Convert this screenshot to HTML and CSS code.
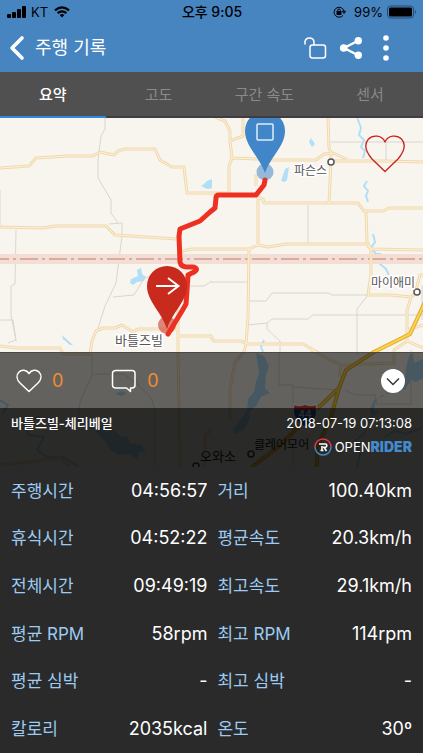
FILE: index.html
```html
<!DOCTYPE html>
<html lang="ko">
<head>
<meta charset="utf-8">
<meta name="viewport" content="width=device-width, initial-scale=1">
<title>주행 기록</title>
<link rel="stylesheet" href="styles.css">
</head>
<body>
<header class="header">
  <div class="status">
    <div class="status-side">
      <svg width="20" height="12" viewBox="0 0 20 12" aria-hidden="true"><rect x="0" y="8" width="4" height="4" rx="1"/><rect x="5" y="6" width="4" height="6" rx="1"/><rect x="10" y="3" width="4" height="9" rx="1"/><rect x="15" y="0" width="4" height="12" rx="1"/></svg>
      <span class="carrier">KT</span>
      <svg class="wifi" width="16" height="12" viewBox="0 0 16 12" fill="none" stroke="#000" stroke-width="2.2" aria-hidden="true"><path d="M1 4.4Q8-1.8 15 4.4M3.6 7.2Q8 3.4 12.4 7.2"/><path d="M5.6 9L8 11.6 10.4 9Q8 7.2 5.6 9z" fill="#000" stroke="none"/></svg>
    </div>
    <span class="clock">오후 9:05</span>
    <div class="status-side status-right">
      <svg class="rotation" width="13" height="12" viewBox="0 0 13 12" fill="none" stroke="#000" aria-hidden="true"><path d="M10 9.4A5 5 0 1 1 11 5.2M9.4 5.2h3.2L11 7.6z"/><rect x="4" y="5.5" width="4" height="3" fill="#000"/><path d="M4.6 5.5V4.4a1.4 1.4 0 0 1 2.8 0v1.1"/></svg>
      <span>99%</span>
      <svg width="30" height="14" viewBox="0 0 30 14" aria-hidden="true"><rect x=".5" y="1" width="26" height="12" rx="3" fill="none" stroke="#26486a"/><rect x="2" y="2.5" width="23" height="9" rx="1.5"/><path d="M28 5q2 2 0 4z" fill="#26486a"/></svg>
    </div>
  </div>
  <div class="nav">
    <button class="icon-button" aria-label="뒤로"><svg width="18" height="26" viewBox="0 0 18 26" fill="none" stroke="#fff" stroke-width="3.6" stroke-linecap="round" stroke-linejoin="round"><path d="M14 3L4 13l10 10"/></svg></button>
    <h1>주행 기록</h1>
    <div class="actions">
      <button class="icon-button" aria-label="공개 설정"><svg width="23" height="24" viewBox="0 0 23 24" fill="none" stroke="#fff" stroke-width="1.5" stroke-linecap="round"><rect x="6" y="9" width="15.5" height="13" rx="2.5"/><path d="M1 8V5.500A4.600 4.500 0 0 1 10 5.500V9"/></svg></button>
      <button class="icon-button" aria-label="공유"><svg width="24" height="24" viewBox="0 0 24 24" fill="#fff"><path d="M19.500 4.500L5 12l14.500 7.500" fill="none" stroke="#fff" stroke-width="2.4"/><circle cx="19.300" cy="4.700" r="3.700"/><circle cx="4.700" cy="12" r="3.800"/><circle cx="19.300" cy="19.300" r="3.700"/></svg></button>
      <button class="icon-button" aria-label="더 보기"><svg width="8" height="26" viewBox="0 0 8 26" fill="#fff"><circle cx="4" cy="3" r="2.800"/><circle cx="4" cy="13" r="2.800"/><circle cx="4" cy="23" r="2.800"/></svg></button>
    </div>
  </div>
</header>

<nav class="tabs">
  <a class="tab active" href="#summary">요약</a>
  <a class="tab" href="#altitude">고도</a>
  <a class="tab" href="#speed">구간 속도</a>
  <a class="tab" href="#sensor">센서</a>
</nav>

<main class="main">
<section class="map">
  <svg class="map-canvas" viewBox="0 118 423 349" preserveAspectRatio="xMidYMid slice" role="img" aria-label="주행 경로 지도">
    <defs>
      <path id="roads" d="M0 168L29 166 36 158 68 156H93L100 152 114 155 118 151 125 149H155L160 160 172 167H184L187 193H229M215 117L225 121 230 131V141L232 158 229 166V193M230 141L243 136V117M232 158L256 159 271 160H316L324 154 333 153 348 160M331 161H388L423 162M328 117L329 148 331 153V161L329 203M258 194V246M258 198L263 199 264 203H358L364 211H383L389 208H423M366 211L367 242 371 249M211 249H249L258 245 268 247 286 244H366L371 249 423 250M249 249L248 317 246 344 244 352 235 362 230 389V420M371 249V274L368 295H391L411 297 415 294 420 275H423M411 297L407 311V341L394 350V363L341 365 311 350M407 330L423 325M407 341L423 348M211 337L214 341H241L248 344H303L319 353M0 346L18 348H60L63 354H90L92 341 96 331 103 328H115L122 325 133 332 138 329H178M0 227L43 228 55 226H106L115 235 177 239M182 254V251L192 249H211M178 270V350L180 467M178 336H211V337M0 465L61 458 69 467M256 174V186M212 429L205 435V467M341 365L339 377"/>
      <clipPath id="shield-shape"><path d="M294 404Q299 407 305 404Q311 407 316 404Q320 420 305 427Q290 420 294 404z"/></clipPath>
    </defs>
    <rect y="100" width="423" height="380" fill="#f8f5ee"/>
    <g class="water">
      <path d="M201 186l3-2 3-3 5-2v9l-4 1-3-1zM311 138l4 6-3 3-3-5zM285 169l4-2-2 13-2 2-4-1zM131 279l7-3-1-6 4-2 1 6 4 3-2 4-7 1-4 3-3-2zM62 335l11 10-3 0-7-6zM115 394l6-3 6 2-5 3z"/>
      <path d="M256 353l8 3 5 10-3 9-1 13 5 5-9 4-5 9-6 5-1 10-6 9-9 4-1-5 8-10 6-8 1-12 6-7 2-10 3-9z"/>
      <path d="M423 378l-7 4-5-2-6 10-9-5-5 8-9 2-6 5-2 10 5 3-8 2-1-6 4-9 9-4 6-5 3-7 8 1 5-8 1-9 3-12 4-3 1 10 9-4zM92 419l9 6 6 8 6-4 8 8 6-1 3 7 11 2 5 6-7 2-2 7-8-6-10 1-9-6-4-7-9-8z"/>
      <path d="M357 117l4 11-2 7 5 5-3 7 4 4-2 7M367 181l-3 5 4 5-2 5 2 6M373 234l2 8-4 6 5 6 4 0 0 10 6 5 3 6M264 340l-3 7 2 5M0 400l8 5-5 8M40 417l-18 5 7 13 15 2-7 13 10 7 16 0 16 10M376 412l-8 10-4 12-8 6 4 14-3 13M421 428l-15 6-11-3-10 6"/>
    </g>
    <path class="minor" d="M105 117V129L101 136 98 160V178L111 200V213L118 223M109 224L122 223V236L116 283 105 306 98 328M113 297L134 295 145 277 160 277M0 190V225M16 230L15 284 11 286V315L16 340 8 343M0 320H13L16 341M331 142H423M386 142V160M308 205V242M211 282H248M248 301H266L272 293H328L332 295H368L357 309V355M248 325L267 323 272 319H308L313 315H423M267 323V329L280 341V352M190 286H204L212 281M163 330L155 350M92 354V375L80 402 77 428M94 374H124L139 386 132 370M139 386L151 398 155 410V467M279 352V385H293V467M293 387L339 390M345 390L355 395H375L377 404H411V350M422 285V320"/>
    <rect y="254" width="423" height="10" fill="#f3ded5"/>
    <path d="M-9 259H423" stroke="#d29b8c" stroke-width="1.5" stroke-dasharray="18 4 3 4"/>
    <use href="#roads" class="road-edge"/>
    <use href="#roads" class="road-fill"/>
    <path class="highway-edge" d="M425 302L410 334 374 352 346 370 339 388 318 408 278 447 252 467M339 388L331 417 317 448V467"/>
    <path class="highway" d="M425 302L410 334 374 352 346 370 339 388 318 408 278 447 252 467M339 388L331 417 317 448V467"/>
    <g clip-path="url(#shield-shape)"><rect x="290" y="402" width="32" height="28" fill="#2b62ac"/><rect x="290" y="402" width="32" height="8" fill="#e7453f"/></g>
    <path d="M294 404Q299 407 305 404Q311 407 316 404Q320 420 305 427Q290 420 294 404z" fill="none" stroke="#fff" stroke-width="1.5"/>
    <text class="shield" x="305" y="418" text-anchor="middle">44</text>
    <g fill="#fff" stroke="#555" stroke-width="1.5"><circle cx="331" cy="162" r="3"/><circle cx="417" cy="292" r="3"/></g>
    <g fill="none" stroke="#444" stroke-width="1.5"><circle cx="251" cy="454" r="3"/><circle cx="196" cy="466" r="3"/></g>
    <text class="place" x="294" y="175">파슨스</text>
    <text class="place" x="371" y="287">마이애미</text>
    <text class="place city" x="115" y="345">바틀즈빌</text>
    <text class="place plain" x="254" y="449">클레어모어</text>
    <text class="place city plain" x="200" y="461">오와소</text>
    <circle cx="265" cy="172" r="8.500" fill="#4186c8" opacity=".55"/>
    <circle cx="167" cy="325" r="9" fill="#c82a1d" opacity=".55"/>
    <path d="M265 180L264 185 256 195H219Q216 195 216 198L215 208 210 212 200 221 180 229 179 236 180 262Q181 267 187 267H194Q199 269 194 272L188 275 187 290 186 304 182 311 168 334" fill="none" stroke="#ed3022" stroke-width="5" stroke-linecap="round" stroke-linejoin="round"/>
    <path d="M265 173C259 156 245 146 245 131A20 20 0 0 1 285 131C285 146 271 156 265 173z" fill="#4086c9"/>
    <rect x="257" y="124" width="16" height="16" rx="1" fill="none" stroke="#e1edf8" stroke-width="1.5"/>
    <path d="M167 329C161 311 147 301 147 286A20 20 0 0 1 187 286C187 301 173 311 167 329z" fill="#c82a1d"/>
    <path d="M156 286H178M168 278L178.500 286 168 294" fill="none" stroke="#fff" stroke-width="2"/>
  </svg>
  <button class="icon-button favorite" aria-label="즐겨찾기"><svg width="42" height="40" viewBox="0 0 42 40" fill="none" stroke="#c9201c" stroke-width="1.3" stroke-linejoin="round"><path d="M21 8C18 1 9 .5 4.500 5C-1 11 3 19 8 25L21 37.500 34 25C39 19 43 11 37.500 5C33 .5 24 1 21 8z"/></svg></button>

  <div class="map-overlay">
    <div class="reactions">
      <button class="reaction"><svg width="26" height="24" viewBox="0 0 26 24" fill="none" stroke="#fff" stroke-width="1.5" stroke-linejoin="round"><path d="M13 4.500C10.500.5 5.500.3 3 3C-.2 6.500 1 11 4 14L13 22.500 22 14C25 11 26.200 6.500 23 3C20.500.3 15.500.5 13 4.500z"/></svg><span>0</span></button>
      <button class="reaction"><svg width="26" height="24" viewBox="0 0 26 24" fill="none" stroke="#fff" stroke-width="1.5" stroke-linejoin="round"><path d="M5 1.500H21Q24 1.500 24 4.500V16Q24 19 21 19H19.500V22.500L15.500 19H5Q1.500 19 1.500 16V4.500Q1.500 1.500 5 1.500z"/></svg><span>0</span></button>
      <button class="icon-button collapse" aria-label="접기"><svg width="24" height="24" viewBox="0 0 24 24"><circle cx="12" cy="12" r="12" fill="#fff"/><path d="M6 9.500l6 6 6-6" fill="none" stroke="#333" stroke-width="1.4"/></svg></button>
    </div>
    <div class="ride">
      <span class="ride-name">바틀즈빌-체리베일</span>
      <div class="ride-meta">
        <time datetime="2018-07-19T07:13:08">2018-07-19 07:13:08</time>
        <div class="brand">
          <svg width="18" height="18" viewBox="0 0 18 18" fill="none" aria-hidden="true"><path d="M1 9a8 8 0 0 1 16 0" stroke="#e2364b" stroke-width="1.5"/><path d="M17 9a8 8 0 0 1-16 0" stroke="#4389cd" stroke-width="1.5"/><path d="M5 6h6.500q1.300 0 1.300 1.500T11.500 9.300H9M8 8v5M10 9.300l2.500 3.700M6.500 12.500h3" stroke="#fff" stroke-width="1.600"/></svg>
          <span class="brand-open">OPEN</span><span class="brand-rider">RIDER</span>
        </div>
      </div>
    </div>
  </div>
</section>

<section class="stats" id="summary">
  <table>
    <colgroup><col class="col-label"><col class="col-value"><col class="col-label-second"><col class="col-value-second"></colgroup>
    <tbody>
      <tr><th scope="row">주행시간</th><td>04:56:57</td><th scope="row">거리</th><td>100.40km</td></tr>
      <tr><th scope="row">휴식시간</th><td>04:52:22</td><th scope="row">평균속도</th><td>20.3km/h</td></tr>
      <tr><th scope="row">전체시간</th><td>09:49:19</td><th scope="row">최고속도</th><td>29.1km/h</td></tr>
      <tr><th scope="row">평균 RPM</th><td>58rpm</td><th scope="row">최고 RPM</th><td>114rpm</td></tr>
      <tr><th scope="row">평균 심박</th><td>-</td><th scope="row">최고 심박</th><td>-</td></tr>
      <tr><th scope="row">칼로리</th><td>2035kcal</td><th scope="row">온도</th><td>30º</td></tr>
    </tbody>
  </table>
</section>
</main>
</body>
</html>
```

FILE: styles.css
```css
* {
  box-sizing: border-box;
}

body {
  margin: 0;
  min-height: 100vh;
  display: flex;
  flex-direction: column;
  background: #2a2a2a;
  color: #fff;
  font-family: Inter, "Noto Sans CJK KR", sans-serif;
}

button {
  padding: 0;
  border: 0;
  background: none;
  color: inherit;
  font: inherit;
  cursor: pointer;
}

svg {
  display: block;
}

.header {
  background: #4785c1;
}

.status {
  display: grid;
  grid-template-columns: 1fr auto 1fr;
  align-items: center;
  height: 24px;
  padding: 0 6px 0 7px;
  color: #000;
  font-size: 13px;
  line-height: 16px;
}

.status-side {
  display: flex;
  align-items: center;
  gap: 4px;
}

.status-right {
  justify-content: flex-end;
}

.wifi {
  margin-left: 2px;
}

.rotation {
  margin-right: 4px;
}

.clock {
  font-size: 14px;
  font-weight: 500;
}

.nav {
  display: flex;
  align-items: center;
  height: 48px;
  padding: 0 33px 0 8px;
}

h1 {
  margin: 0 0 0 9px;
  font-size: 18px;
  font-weight: 400;
  line-height: 24px;
}

.actions {
  display: flex;
  align-items: center;
  gap: 12px;
  margin-left: auto;
}

.actions .icon-button:last-child {
  margin-left: 7px;
}

.tabs {
  display: grid;
  grid-template-columns: repeat(4, 1fr);
  height: 46px;
  background: #505050;
}

.tab {
  display: flex;
  align-items: center;
  justify-content: center;
  border-top: 2px solid #505050;
  border-bottom: 2px solid #403d42;
  color: #8a8a8a;
  font-size: 15px;
  line-height: 20px;
  text-decoration: none;
}

.tab.active {
  border-bottom-color: #2f8ade;
  color: #fff;
  font-weight: 500;
}

.main {
  flex: 1;
  display: flex;
  flex-direction: column;
}

.map {
  position: relative;
  display: grid;
  grid-template-rows: 349px;
}

.map-canvas {
  grid-area: 1 / 1;
  width: 100%;
  height: 100%;
}

.water {
  fill: #b0dff7;
}

.water path:last-child {
  fill: none;
  stroke: #b0dff7;
  stroke-width: 2;
}

.minor {
  fill: none;
  stroke: #d8d6d0;
  stroke-width: 1;
}

.road-edge {
  fill: none;
  stroke: #f0d8ae;
  stroke-width: 3;
  stroke-linejoin: round;
}

.road-fill {
  fill: none;
  stroke: #fdf3d7;
  stroke-width: 1;
  stroke-linejoin: round;
}

.highway-edge {
  fill: none;
  stroke: #e2a93c;
  stroke-width: 4;
}

.highway {
  fill: none;
  stroke: #fbd53f;
  stroke-width: 2;
}

.place {
  fill: #555;
  stroke: #fff;
  stroke-width: 3px;
  paint-order: stroke;
  font-size: 12px;
}

.city {
  font-size: 13px;
}

.plain {
  fill: #222;
  stroke: none;
}

.shield {
  fill: #fff;
  font-size: 10px;
  font-weight: 600;
}

.favorite {
  position: absolute;
  top: 16px;
  right: 17px;
}

.map-overlay {
  grid-area: 1 / 1;
  align-self: end;
  position: relative;
}

.reactions {
  display: flex;
  align-items: center;
  gap: 48px;
  height: 56px;
  padding: 0 18px 0 16px;
  border-top: 1px solid #4b4a46;
  background: rgba(0, 0, 0, 0.6);
}

.reaction {
  display: flex;
  align-items: center;
  gap: 10px;
}

.reaction span {
  color: #f18d2c;
  font-size: 18px;
  line-height: 24px;
}

.collapse {
  margin-left: auto;
}

.ride {
  display: flex;
  justify-content: space-between;
  height: 59px;
  padding: 6px 11px 0;
  background: rgba(0, 0, 0, 0.83);
  font-size: 13px;
  line-height: 18px;
}

.ride-name {
  font-weight: 500;
}

.ride-meta {
  display: flex;
  flex-direction: column;
  align-items: flex-end;
  gap: 6px;
}

.brand {
  display: flex;
  align-items: center;
}

.brand svg {
  margin-right: 3px;
}

.brand-rider {
  color: #4389cd;
  font-size: 14px;
  font-weight: 900;
}

.stats {
  flex: 1;
  display: grid;
  padding: 0 11px;
}

table {
  width: 100%;
  height: 100%;
  table-layout: fixed;
  border-collapse: collapse;
  font-size: 17px;
  line-height: 24px;
}

.col-label {
  width: 23%;
}

.col-value {
  width: 26%;
}

.col-label-second {
  width: 26%;
}

.col-value-second {
  width: 25%;
}

th,
td {
  padding: 0;
  font-weight: 400;
  white-space: nowrap;
}

th {
  color: #9ccbf3;
  text-align: left;
}

td {
  font-size: 18px;
  text-align: right;
}

td + th {
  padding-left: 10px;
}
```
